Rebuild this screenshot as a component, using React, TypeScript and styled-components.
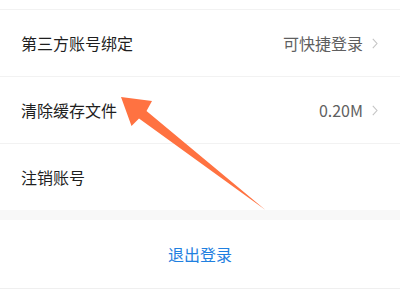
import React from "react";
import styled, { createGlobalStyle } from "styled-components";

const Global = createGlobalStyle`
  html, body { margin: 0; padding: 0; background: #ffffff; }
  body { font-family: "Noto Sans CJK SC", "Noto Sans", sans-serif; }
`;

const Page = styled.div`
  position: relative;
  width: 400px;
  height: 289px;
  overflow: hidden;
  background: #ffffff;
  display: flex;
  flex-direction: column;
`;

const TopSpace = styled.div`
  height: 9px;
  border-bottom: 1px solid #f2f2f2;
`;

const Row = styled.div<{ $last?: boolean }>`
  height: 66px;
  display: flex;
  align-items: center;
  padding: 0 22px 0 21px;
  border-bottom: ${(p) => (p.$last ? "none" : "1px solid #f2f2f2")};
`;

const Label = styled.div`
  flex: 1;
  font-size: 16px;
  color: #1f1f1f;
`;

const Value = styled.div`
  font-size: 16px;
  color: #5f5f5f;
  display: flex;
  align-items: center;
  gap: 9px;
`;

const Chevron = styled.svg`
  width: 6px;
  height: 11px;
  display: block;
`;

const Gap = styled.div`
  height: 10px;
  background: #f8f8f8;
`;

const Logout = styled.div`
  height: 68px;
  display: flex;
  align-items: center;
  justify-content: center;
  font-size: 16px;
  color: #1f80e0;
  border-bottom: 1px solid #efefef;
`;

const Bottom = styled.div`
  flex: 1;
  background: #f8f8f8;
`;

const Arrow = styled.svg`
  position: absolute;
  left: 0;
  top: 0;
  width: 400px;
  height: 289px;
  pointer-events: none;
`;

const ChevronIcon = () => (
  <Chevron viewBox="0 0 6 11">
    <path d="M0.8 0.8 L5 5.5 L0.8 10.2" fill="none" stroke="#c4c4c4" strokeWidth="1.1" />
  </Chevron>
);

export default function App() {
  return (
    <>
      <Global />
      <Page>
        <TopSpace />
        <Row>
          <Label>第三方账号绑定</Label>
          <Value>
            可快捷登录
            <ChevronIcon />
          </Value>
        </Row>
        <Row>
          <Label>清除缓存文件</Label>
          <Value>
            0.20M
            <ChevronIcon />
          </Value>
        </Row>
        <Row $last>
          <Label>注销账号</Label>
        </Row>
        <Gap />
        <Logout>退出登录</Logout>
        <Bottom />
        <Arrow viewBox="0 0 400 289">
          <polygon
            points="121,97 152,101 146.5,111 265.5,210 139,118.5 131.5,126"
            fill="#ff7241"
          />
        </Arrow>
      </Page>
    </>
  );
}
